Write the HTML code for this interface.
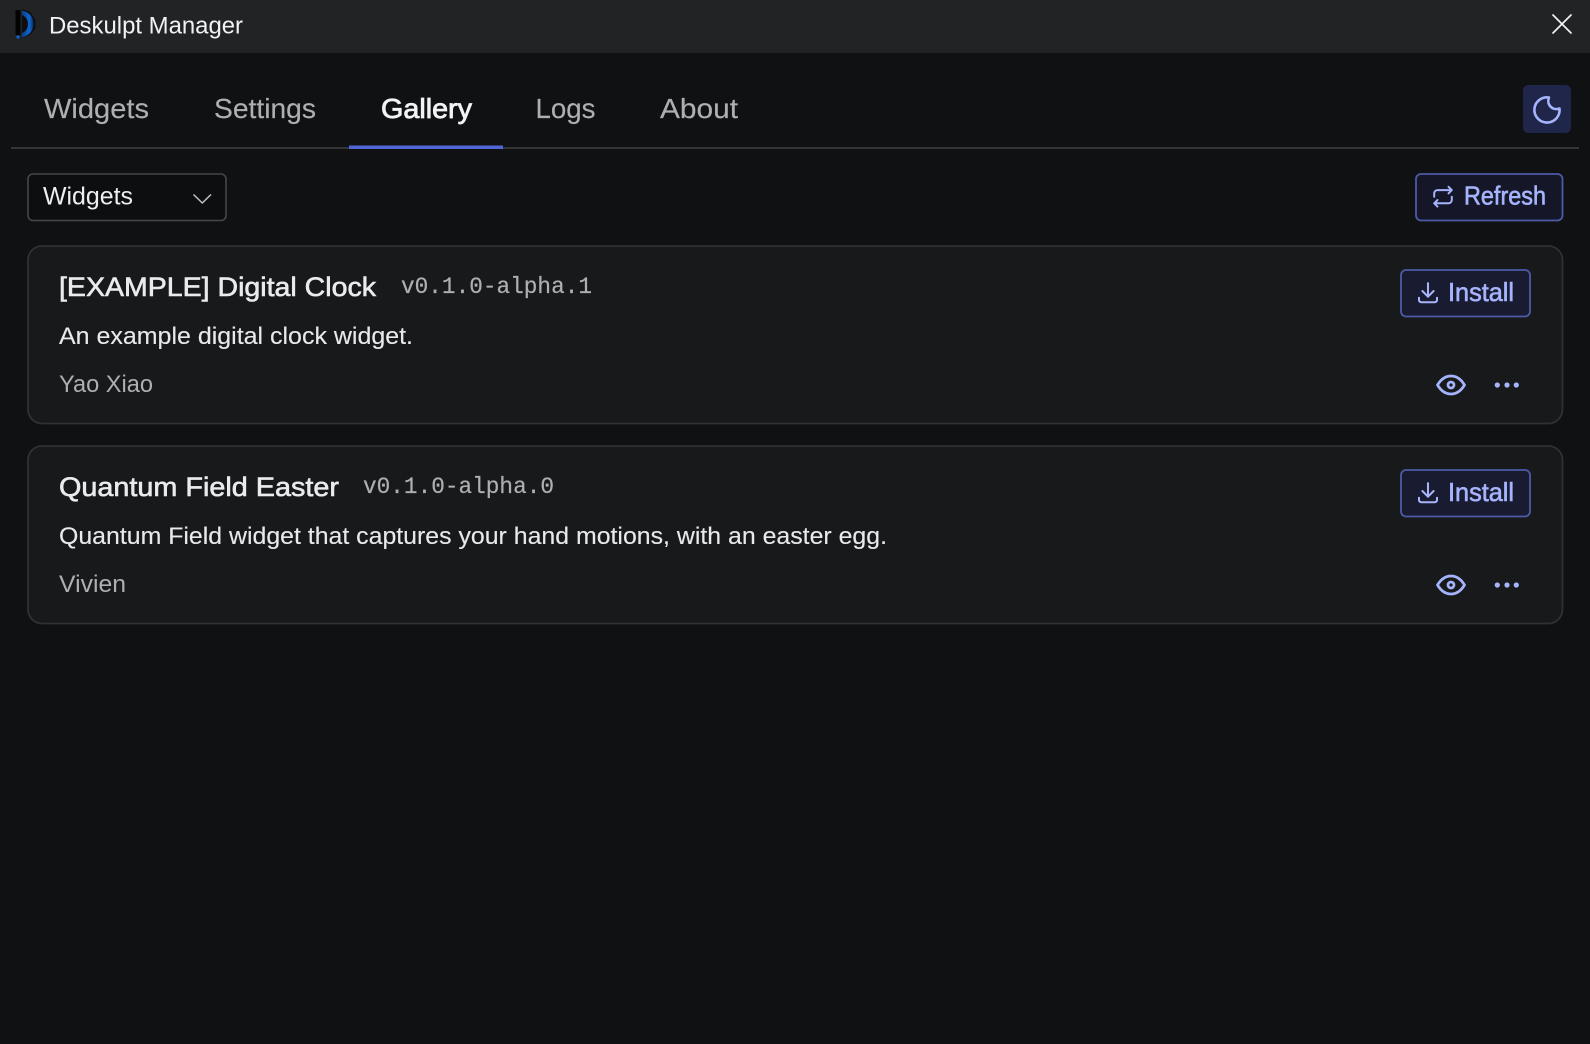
<!DOCTYPE html>
<html lang="en"><head><meta charset="utf-8"><title>Deskulpt Manager</title>
<style>
html,body{margin:0;padding:0;background:#101113;width:1590px;height:1044px;overflow:hidden}
svg{display:block}
text{font-family:"Liberation Sans",sans-serif}
.m{font-family:"Liberation Mono",monospace;fill:#aeafb3;font-size:23px;stroke:#aeafb3;stroke-width:.2}
.tab{font-size:28px;fill:#adafb3;stroke:#adafb3;stroke-width:.15}
.ic{fill:none;stroke:#a5b4fc;stroke-linecap:round;stroke-linejoin:round}
.t{font-size:27px;fill:#e9ecef;stroke:#e9ecef;stroke-width:.6}
.d{font-size:24px;fill:#e8e9eb;stroke:#e8e9eb;stroke-width:.12}
.a{font-size:24px;fill:#aeafb3}
.b{font-size:26px;fill:#a5b4fc;stroke:#a5b4fc;stroke-width:.6}
</style></head>
<body>
<svg xmlns="http://www.w3.org/2000/svg" width="1590" height="1044" viewBox="0 0 1590 1044">
<defs><linearGradient id="g" x1="0" x2="1"><stop offset="0" stop-color="#0a3f8a"/><stop offset=".65" stop-color="#0f66cc"/><stop offset="1" stop-color="#0a2c5c"/></linearGradient></defs>
<rect width="1590" height="1044" fill="#101113"/>
<rect width="1590" height="53" fill="#222325"/>
<path d="M15.500 10H20.500V34L18 37L15.500 34Z" fill="#030303"/>
<circle cx="18" cy="37" r="1.700" fill="#0f5fc0"/>
<path d="M22 9L30 12L35.500 20V28L30 35L22 38Z" fill="#0c0e13"/>
<path d="M22 10.500C29 12 33.500 17 33.500 24C33.500 31 29 35.500 22 37.500V33C26 31.500 28 28 28 24C28 20 26 16.500 22 15Z" fill="url(#g)"/>
<text x="49" y="33.500" font-size="24" fill="#f1f2f3" textLength="194" lengthAdjust="spacingAndGlyphs">Deskulpt Manager</text>
<path d="M1552.500 14.500L1571.500 33.500M1571.500 14.500L1552.500 33.500" stroke="#f1f2f3" stroke-width="1.700" fill="none"/>

<text class="tab" x="44" y="118" textLength="105" lengthAdjust="spacingAndGlyphs">Widgets</text>
<text class="tab" x="214" y="118" textLength="102" lengthAdjust="spacingAndGlyphs">Settings</text>
<text class="tab" x="381" y="118" textLength="91" lengthAdjust="spacingAndGlyphs" style="fill:#f1f3f5;stroke:#f1f3f5;stroke-width:.8">Gallery</text>
<text class="tab" x="535.500" y="118" textLength="60" lengthAdjust="spacingAndGlyphs">Logs</text>
<text class="tab" x="660" y="118" textLength="78" lengthAdjust="spacingAndGlyphs">About</text>
<rect x="11" y="147" width="1568" height="2" fill="#343538"/>
<rect x="349" y="145.500" width="154" height="3.500" fill="#5065d8"/>
<rect x="1523" y="85" width="48" height="48" rx="5" fill="#20254a"/>
<path class="ic" stroke-width="2.600" d="M1549 97.500A12.600 12.600 0 1 0 1559.500 108.500A8.200 8.200 0 0 1 1549 97.500Z"/>

<rect x="28" y="174" width="198" height="46.500" rx="5" fill="#0d0e10" stroke="#46474b" stroke-width="1.600"/>
<text x="43" y="204.500" font-size="25" fill="#eceef0" textLength="90" lengthAdjust="spacingAndGlyphs">Widgets</text>
<path d="M193.500 194.500L202.300 203L211 194.500" fill="none" stroke="#c1c2c5" stroke-width="1.500"/>

<rect x="1416" y="174" width="146.500" height="46.500" rx="5" fill="#151728" stroke="#4d5aa8" stroke-width="1.800"/>
<g class="ic" transform="translate(1429.800 183.500) scale(1.1)" stroke-width="1.800"><path d="M4 12v-3a3 3 0 0 1 3 -3h13m-3 -3l3 3l-3 3"/><path d="M20 12v3a3 3 0 0 1 -3 3h-13m3 3l-3 -3l3 -3"/></g>
<text class="b" x="1464" y="204.500" textLength="82" lengthAdjust="spacingAndGlyphs">Refresh</text>

<rect x="28" y="246" width="1534.500" height="177.500" rx="14" fill="#18191b" stroke="#303134" stroke-width="1.800"/>
<text class="t" x="59" y="296" textLength="317" lengthAdjust="spacingAndGlyphs">[EXAMPLE] Digital Clock</text>
<text class="m" x="401" y="293" textLength="191" lengthAdjust="spacingAndGlyphs">v0.1.0-alpha.1</text>
<text class="d" x="59" y="344" textLength="354" lengthAdjust="spacingAndGlyphs">An example digital clock widget.</text>
<text class="a" x="59" y="392" textLength="94" lengthAdjust="spacingAndGlyphs">Yao Xiao</text>
<rect x="1401" y="270" width="129" height="46.500" rx="5" fill="#191c30" stroke="#4d5aa8" stroke-width="1.800"/>
<g class="ic" transform="translate(1414.500 278.600) scale(1.125)" stroke-width="1.800"><path d="M4 17v2a2 2 0 0 0 2 2h12a2 2 0 0 0 2 -2v-2"/><path d="M7 11l5 5l5 -5"/><path d="M12 4l0 12"/></g>
<text class="b" x="1448" y="301" textLength="66" lengthAdjust="spacingAndGlyphs">Install</text>
<g class="ic" transform="translate(1433 367) scale(1.5)" stroke-width="1.800"><path d="M10 12a2 2 0 1 0 4 0a2 2 0 0 0 -4 0"/><path d="M21 12c-2.400 4 -5.400 6 -9 6c-3.600 0 -6.600 -2 -9 -6c2.400 -4 5.400 -6 9 -6c3.600 0 6.600 2 9 6"/></g>
<g fill="#a5b4fc"><circle cx="1497.300" cy="385" r="2.600"/><circle cx="1507" cy="385" r="2.600"/><circle cx="1516.300" cy="385" r="2.600"/></g>

<rect x="28" y="446" width="1534.500" height="177.500" rx="14" fill="#18191b" stroke="#303134" stroke-width="1.800"/>
<text class="t" x="59" y="496" textLength="280" lengthAdjust="spacingAndGlyphs">Quantum Field Easter</text>
<text class="m" x="363" y="493" textLength="191" lengthAdjust="spacingAndGlyphs">v0.1.0-alpha.0</text>
<text class="d" x="59" y="544" textLength="828" lengthAdjust="spacingAndGlyphs">Quantum Field widget that captures your hand motions, with an easter egg.</text>
<text class="a" x="59" y="592" textLength="67" lengthAdjust="spacingAndGlyphs">Vivien</text>
<rect x="1401" y="470" width="129" height="46.500" rx="5" fill="#191c30" stroke="#4d5aa8" stroke-width="1.800"/>
<g class="ic" transform="translate(1414.500 478.600) scale(1.125)" stroke-width="1.800"><path d="M4 17v2a2 2 0 0 0 2 2h12a2 2 0 0 0 2 -2v-2"/><path d="M7 11l5 5l5 -5"/><path d="M12 4l0 12"/></g>
<text class="b" x="1448" y="501" textLength="66" lengthAdjust="spacingAndGlyphs">Install</text>
<g class="ic" transform="translate(1433 567) scale(1.5)" stroke-width="1.800"><path d="M10 12a2 2 0 1 0 4 0a2 2 0 0 0 -4 0"/><path d="M21 12c-2.400 4 -5.400 6 -9 6c-3.600 0 -6.600 -2 -9 -6c2.400 -4 5.400 -6 9 -6c3.600 0 6.600 2 9 6"/></g>
<g fill="#a5b4fc"><circle cx="1497.300" cy="585" r="2.600"/><circle cx="1507" cy="585" r="2.600"/><circle cx="1516.300" cy="585" r="2.600"/></g>
</svg>
</body></html>
